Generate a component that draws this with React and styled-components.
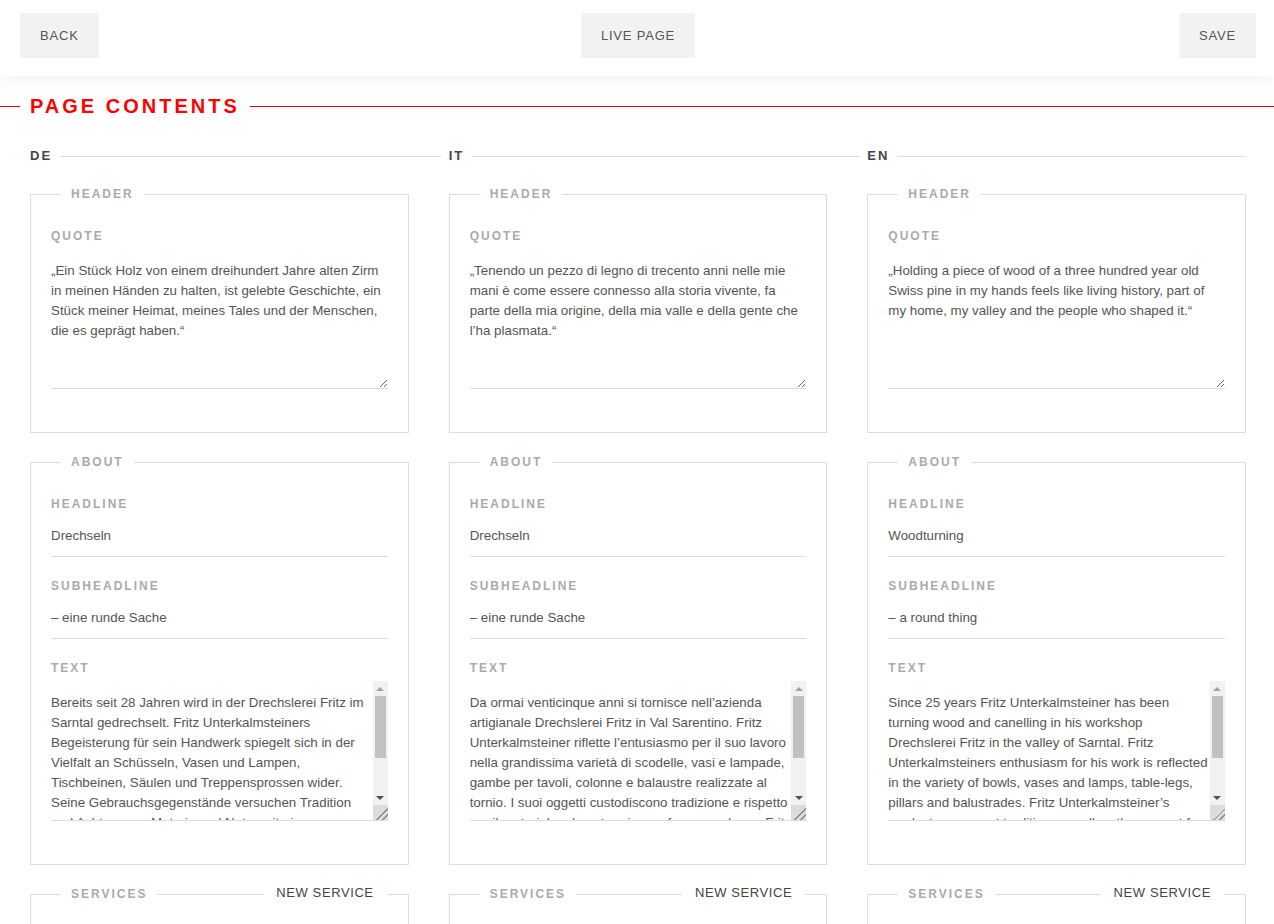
import React from "react";
import styled, { createGlobalStyle } from "styled-components";

const GlobalStyle = createGlobalStyle`
  body {
    margin: 0;
    background: #fff;
    font-family: "Liberation Sans", Arial, sans-serif;
    color: #555;
  }
  * { box-sizing: border-box; }
`;

const languages = [
  {
    code: "DE",
    quote:
      "„Ein Stück Holz von einem dreihundert Jahre alten Zirm in meinen Händen zu halten, ist gelebte Geschichte, ein Stück meiner Heimat, meines Tales und der Menschen, die es geprägt haben.“",
    headline: "Drechseln",
    subheadline: "– eine runde Sache",
    text:
      "Bereits seit 28 Jahren wird in der Drechslerei Fritz im Sarntal gedrechselt. Fritz Unterkalmsteiners Begeisterung für sein Handwerk spiegelt sich in der Vielfalt an Schüsseln, Vasen und Lampen, Tischbeinen, Säulen und Treppensprossen wider. Seine Gebrauchsgegenstände versuchen Tradition und Achtung vor Materie und Natur mit einer modernen Formensprache zu verbinden.",
  },
  {
    code: "IT",
    quote:
      "„Tenendo un pezzo di legno di trecento anni nelle mie mani è come essere connesso alla storia vivente, fa parte della mia origine, della mia valle e della gente che l’ha plasmata.“",
    headline: "Drechseln",
    subheadline: "– eine runde Sache",
    text:
      "Da ormai venticinque anni si tornisce nell’azienda artigianale Drechslerei Fritz in Val Sarentino. Fritz Unterkalmsteiner riflette l’entusiasmo per il suo lavoro nella grandissima varietà di scodelle, vasi e lampade, gambe per tavoli, colonne e balaustre realizzate al tornio. I suoi oggetti custodiscono tradizione e rispetto per il materiale e la natura in una forma moderna. Fritz",
  },
  {
    code: "EN",
    quote:
      "„Holding a piece of wood of a three hundred year old Swiss pine in my hands feels like living history, part of my home, my valley and the people who shaped it.“",
    headline: "Woodturning",
    subheadline: "– a round thing",
    text:
      "Since 25 years Fritz Unterkalmsteiner has been turning wood and canelling in his workshop Drechslerei Fritz in the valley of Sarntal. Fritz Unterkalmsteiners enthusiasm for his work is reflected in the variety of bowls, vases and lamps, table-legs, pillars and balustrades. Fritz Unterkalmsteiner’s products represent tradition as well as the respect for material and nature.",
  },
];

const ScrollText = ({ value }) => (
  <StyledScrollWrap>
    <StyledTextarea $scroll defaultValue={value} />
    <StyledScrollbar aria-hidden="true">
      <StyledArrowBox>
        <StyledArrow $up />
      </StyledArrowBox>
      <StyledTrack>
        <StyledThumb />
      </StyledTrack>
      <StyledArrowBox>
        <StyledArrow />
      </StyledArrowBox>
      <StyledCorner />
    </StyledScrollbar>
  </StyledScrollWrap>
);

const App = () => {
  return (
    <>
      <GlobalStyle />
      <StyledTopBar>
        <StyledBarSlot>
          <StyledBarButton>Back</StyledBarButton>
        </StyledBarSlot>
        <StyledBarButton>Live page</StyledBarButton>
        <StyledBarSlot $end>
          <StyledBarButton>Save</StyledBarButton>
        </StyledBarSlot>
      </StyledTopBar>

      <StyledTitleRow>
        <StyledTitleLine $short />
        <StyledTitle>Page contents</StyledTitle>
        <StyledTitleLine />
      </StyledTitleRow>

      <StyledColumns>
        {languages.map((lang, i) => (
          <StyledColumn key={lang.code}>
            <StyledLangHeading $last={i === languages.length - 1}>
              <span>{lang.code}</span>
            </StyledLangHeading>

            <StyledFieldset>
              <StyledLegend>Header</StyledLegend>
              <StyledLabel>Quote</StyledLabel>
              <StyledTextarea defaultValue={lang.quote} />
            </StyledFieldset>

            <StyledFieldset>
              <StyledLegend>About</StyledLegend>
              <StyledLabel>Headline</StyledLabel>
              <StyledInput defaultValue={lang.headline} />
              <StyledLabel $spaced>Subheadline</StyledLabel>
              <StyledInput defaultValue={lang.subheadline} />
              <StyledLabel $spaced>Text</StyledLabel>
              <ScrollText value={lang.text} />
            </StyledFieldset>

            <StyledFieldset $open>
              <StyledLegend>Services</StyledLegend>
              <StyledNewButton>New service</StyledNewButton>
            </StyledFieldset>
          </StyledColumn>
        ))}
      </StyledColumns>
    </>
  );
};

const StyledTopBar = styled.header`
  display: grid;
  grid-template-columns: 1fr auto 1fr;
  align-items: center;
  padding: 13px 18px 18px 20px;
  background: #fff;
  box-shadow: 0 4px 16px rgba(0, 0, 0, 0.05);
`;
const StyledBarSlot = styled.div`
  display: flex;
  justify-content: ${(p) => (p.$end ? "flex-end" : "flex-start")};
`;
const StyledBarButton = styled.button`
  height: 45px;
  padding: 0 20px;
  border: 0;
  background: #f2f2f2;
  color: #555;
  font-family: inherit;
  font-size: 13px;
  letter-spacing: 0.8px;
  text-transform: uppercase;
  cursor: pointer;
`;

const StyledTitleRow = styled.div`
  display: flex;
  align-items: center;
  gap: 10px;
  margin-top: 18px;
`;
const StyledTitleLine = styled.div`
  height: 1px;
  background: #e3000f;
  ${(p) => (p.$short ? "width: 20px;" : "flex: 1;")}
`;
const StyledTitle = styled.h1`
  margin: 0;
  font-size: 20px;
  line-height: 24px;
  font-weight: bold;
  letter-spacing: 3px;
  text-transform: uppercase;
  color: #ff0000;
`;

const StyledColumns = styled.main`
  display: grid;
  grid-template-columns: repeat(3, 1fr);
  column-gap: 40px;
  padding: 31px 28px 40px 30px;
`;
const StyledColumn = styled.section`
  display: flex;
  flex-direction: column;
  gap: 22px;
  min-width: 0;
`;
const StyledLangHeading = styled.h2`
  display: flex;
  align-items: center;
  gap: 8px;
  margin: 0 ${(p) => (p.$last ? "0" : "-32px")} 2px 0;
  font-size: 13px;
  line-height: 14px;
  font-weight: bold;
  letter-spacing: 2px;
  color: #444;

  &::after {
    content: "";
    flex: 1;
    height: 1px;
    background: #ddd;
  }
`;

const StyledFieldset = styled.fieldset`
  position: relative;
  margin: 0;
  padding: 28px 20px 43px;
  border: 1px solid #ddd;
  min-width: 0;
  ${(p) => (p.$open ? "min-height: 120px;" : "")}
`;
const StyledLegend = styled.legend`
  margin-left: 10px;
  padding: 0 10px;
  font-size: 12px;
  line-height: 14px;
  font-weight: bold;
  letter-spacing: 2px;
  text-transform: uppercase;
  color: #aaa;
`;
const StyledNewButton = styled.button`
  position: absolute;
  top: -16px;
  right: 21px;
  padding: 0 13px;
  border: 0;
  background: #fff;
  color: #444;
  font-family: inherit;
  font-size: 13px;
  line-height: 16px;
  letter-spacing: 0.6px;
  text-transform: uppercase;
  cursor: pointer;
`;
const StyledLabel = styled.label`
  display: block;
  margin: ${(p) => (p.$spaced ? "22px" : "0")} 0 6px;
  font-size: 12px;
  line-height: 14px;
  font-weight: bold;
  letter-spacing: 2px;
  text-transform: uppercase;
  color: #aaa;
`;
const StyledInput = styled.input`
  display: block;
  width: 100%;
  height: 40px;
  margin: 0;
  padding: 0 0 3px;
  border: 0;
  border-bottom: 1px solid #ddd;
  outline: 0;
  background: transparent;
  font-family: inherit;
  font-size: 13.33px;
  color: #555;
`;
const StyledTextarea = styled.textarea`
  display: block;
  width: 100%;
  height: 140px;
  margin: 0;
  padding: 12px ${(p) => (p.$scroll ? "15px" : "0")} 12px 0;
  border: 0;
  border-bottom: 1px solid #ddd;
  outline: 0;
  background: transparent;
  font-family: inherit;
  font-size: 13.33px;
  line-height: 20px;
  color: #555;
`;

const StyledScrollWrap = styled.div`
  position: relative;
`;
const StyledScrollbar = styled.div`
  position: absolute;
  top: 0;
  right: 0;
  bottom: 1px;
  width: 15px;
  display: flex;
  flex-direction: column;
  background: #f1f1f1;
  pointer-events: none;
`;
const StyledArrowBox = styled.div`
  height: 15px;
  display: flex;
  align-items: center;
  justify-content: center;
`;
const StyledArrow = styled.span`
  width: 0;
  height: 0;
  border-left: 4px solid transparent;
  border-right: 4px solid transparent;
  ${(p) =>
    p.$up
      ? "border-bottom: 4px solid #a3a3a3;"
      : "border-top: 4px solid #505050;"}
`;
const StyledTrack = styled.div`
  flex: 1;
  padding: 0 2px;
`;
const StyledThumb = styled.div`
  height: 62px;
  background: #c1c1c1;
`;
const StyledCorner = styled.div`
  height: 15px;
  background-color: #dcdcdc;
  background-image: linear-gradient(
    135deg,
    transparent 60%,
    #8a8a8a 60%,
    #8a8a8a 66%,
    transparent 66%,
    transparent 78%,
    #8a8a8a 78%,
    #8a8a8a 84%,
    transparent 84%
  );
`;

export default App;
